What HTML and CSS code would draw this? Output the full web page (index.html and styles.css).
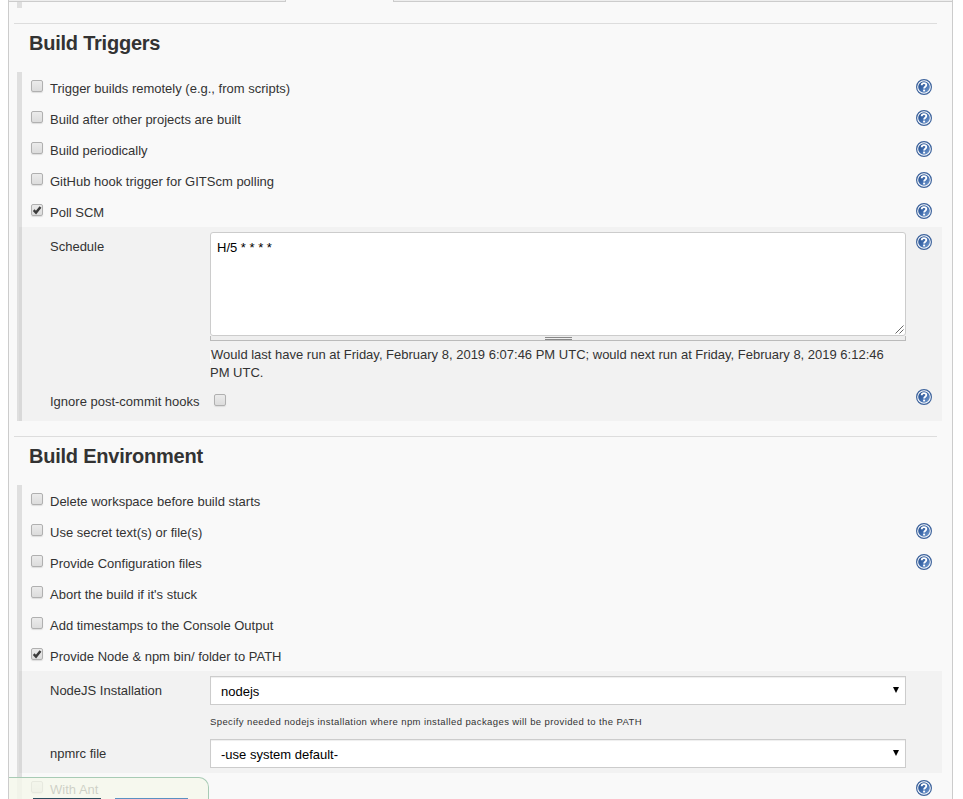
FILE: index.html
```html
<!DOCTYPE html>
<html lang="en">
<head>
<meta charset="utf-8">
<title>Project configuration</title>
<link rel="stylesheet" href="styles.css">
</head>
<body>
<svg class="defs" aria-hidden="true">
  <defs>
    <linearGradient id="blue" x1="0" y1="0" x2="1" y2="1"><stop offset="0" stop-color="#234b87"/><stop offset=".5" stop-color="#3f6cae"/><stop offset="1" stop-color="#7ba0d0"/></linearGradient>
    <symbol id="help" viewBox="0 0 16 16">
      <circle cx="8" cy="8" r="7.4" fill="#fff" stroke="#3d639c" stroke-width="1.2"/>
      <circle cx="8" cy="8" r="5.8" fill="url(#blue)"/>
      <path d="M5.7 6.2C5.7 3.4 10.3 3.4 10.3 6.1C10.3 7.7 8.2 7.7 8.1 9.5" fill="none" stroke="#fff" stroke-width="1.9"/>
      <path d="M7.1 10.6h2v1.8h-2z" fill="#fff"/>
    </symbol>
    <symbol id="tick" viewBox="0 0 12 12"><path d="M2.7 6.1L5 8.6L9.5 3" fill="none" stroke="#3b3b3b" stroke-width="2.4"/></symbol>
  </defs>
</svg>
<main class="panel">
  <div class="tabs"><i class="tab-left"></i><i class="tab-right"></i></div>
  <div class="previous"></div>
  <section class="section triggers">
    <h2>Build Triggers</h2>
    <div class="group">
      <div class="row"><i class="box"></i><span class="label">Trigger builds remotely (e.g., from scripts)</span><svg class="help"><use href="#help"/></svg></div>
      <div class="row"><i class="box"></i><span class="label">Build after other projects are built</span><svg class="help"><use href="#help"/></svg></div>
      <div class="row"><i class="box"></i><span class="label">Build periodically</span><svg class="help"><use href="#help"/></svg></div>
      <div class="row"><i class="box"></i><span class="label">GitHub hook trigger for GITScm polling</span><svg class="help"><use href="#help"/></svg></div>
      <div class="row"><i class="box"><svg><use href="#tick"/></svg></i><span class="label">Poll SCM</span><svg class="help"><use href="#help"/></svg></div>
      <div class="nested schedule">
        <div class="field">
          <span class="name">Schedule</span>
          <div class="control">
            <div class="textarea"><span>H/5 * * * *</span><svg class="grip" viewBox="0 0 9 9"><path d="M.5 8.5l8-8M4.5 8.5l4-4" fill="none" stroke="#666"/></svg></div>
            <div class="handle"><i></i></div>
            <p class="preview"><i></i>Would last have run at Friday, February 8, 2019 6:07:46 PM UTC; would next run at Friday, February 8, 2019 6:12:46<br>PM UTC.</p>
          </div>
          <svg class="help"><use href="#help"/></svg>
        </div>
        <div class="field hooks">
          <span class="name">Ignore post-commit hooks</span>
          <div class="control"><i class="box"></i></div>
          <svg class="help"><use href="#help"/></svg>
        </div>
      </div>
    </div>
  </section>
  <section class="section">
    <h2>Build Environment</h2>
    <div class="group">
      <div class="row"><i class="box"></i><span class="label">Delete workspace before build starts</span></div>
      <div class="row"><i class="box"></i><span class="label">Use secret text(s) or file(s)</span><svg class="help"><use href="#help"/></svg></div>
      <div class="row"><i class="box"></i><span class="label">Provide Configuration files</span><svg class="help"><use href="#help"/></svg></div>
      <div class="row"><i class="box"></i><span class="label">Abort the build if it's stuck</span></div>
      <div class="row"><i class="box"></i><span class="label">Add timestamps to the Console Output</span></div>
      <div class="row"><i class="box"><svg><use href="#tick"/></svg></i><span class="label">Provide Node &amp; npm bin/ folder to PATH</span></div>
      <div class="nested node">
        <div class="field">
          <span class="name">NodeJS Installation</span>
          <div class="control">
            <div class="select"><span>nodejs</span><i></i></div>
            <p class="hint">Specify needed nodejs installation where npm installed packages will be provided to the PATH</p>
          </div>
        </div>
        <div class="field">
          <span class="name">npmrc file</span>
          <div class="control"><div class="select"><span>-use system default-</span><i></i></div></div>
        </div>
      </div>
      <div class="row"><i class="box"></i><span class="label">With Ant</span><svg class="help"><use href="#help"/></svg></div>
    </div>
  </section>
  <div class="savebar"><i class="save"></i><i class="apply"></i></div>
</main>
</body>
</html>
```
FILE: styles.css
```css
* { box-sizing: border-box; }
body {
  margin: 0;
  height: 799px;
  overflow: hidden;
  background: #fff;
  color: #333;
  font: 13px/18px "Liberation Sans", Arial, sans-serif;
}
.defs { position: absolute; width: 0; height: 0; }
svg { display: block; }
.panel {
  position: relative;
  width: 945px;
  height: 799px;
  margin-left: 8px;
  overflow: hidden;
  border: solid #ccc;
  border-width: 0 1px;
  background: #f9f9f9;
}
.tabs { display: flex; justify-content: space-between; height: 2px; }
.tabs i { background: #eee; border-bottom: 1px solid #ccc; }
.tab-left { width: 277px; border-right: 1px solid #ccc; }
.tab-right { width: 559px; border-left: 1px solid #ccc; }
.previous { width: 5px; height: 6px; margin: 0 0 15px 8px; background: #dfdfdf; }
.section { margin: 0 15px 0 5px; border-top: 1px solid #ddd; }
h2 {
  margin: 7px 0 16px 15px;
  font-size: 20px;
  line-height: 25px;
  font-weight: bold;
  letter-spacing: -.23px;
}
.group {
  margin: 0 -5px 15px 3px;
  border-left: 5px solid #dfdfdf;
}
.row {
  display: grid;
  grid-template-columns: 19px 1fr 16px;
  height: 31px;
  padding: 8px 10px 0 9px;
}
.label { white-space: nowrap; }
.row .help { margin-top: -1px; }
.help { width: 16px; height: 16px; }
.box {
  display: block;
  width: 12px;
  height: 12px;
  border: 1px solid #b0b0b0;
  border-radius: 2px;
  background: linear-gradient(#ebebeb, #dcdcdc);
  box-shadow: 0 1px 1px #ddd;
}
.box svg { width: 12px; height: 12px; margin: -1px; }
.nested {
  margin-left: -3px;
  padding: 5px 10px 0 0;
  border-left: 3px solid #d9d9d9;
  background: #f2f2f2;
}
.schedule { height: 194px; }
.node { height: 102px; }
.field {
  display: grid;
  grid-template-columns: 160px 696px 16px;
  padding-left: 28px;
}
.field .help { margin: 2px 0 0 10px; }
.name { padding-top: 6px; white-space: nowrap; }
.textarea {
  display: flex;
  justify-content: space-between;
  height: 104px;
  padding: 6px 0 0 6px;
  border: 1px solid #ccc;
  border-radius: 3px;
  background: #fff;
  color: #000;
}
.grip { align-self: flex-end; width: 9px; height: 9px; margin: 0 1px 1px 0; }
.handle {
  display: flex;
  justify-content: center;
  height: 5px;
  border: solid #bbb;
  border-width: 0 1px 1px;
  background: #eee;
}
.handle i { width: 27px; height: 3px; margin-top: 1px; border: solid #888; border-width: 1px 0; }
p { margin: 0; white-space: nowrap; }
.preview { padding-top: 5px; }
.preview i { display: inline-block; width: 1px; height: 12px; background: #fff; vertical-align: -4px; }
.hooks { padding-top: 5px; }
.hooks .name { padding-top: 7px; margin-top: -1px; }
.hooks .box { margin: 7px 0 0 4px; }
.select {
  display: flex;
  justify-content: space-between;
  height: 29px;
  padding: 6px 6px 0 10px;
  border: 1px solid #ccc;
  background: #fff;
  box-shadow: inset 0 1px 1px #eee;
  color: #000;
}
.select i { height: 0; margin-top: 4px; border: solid transparent; border-width: 6px 3px 0; border-top-color: #000; }
.hint { height: 34px; padding-top: 8px; font-size: 9.5px; letter-spacing: .4px; }
.savebar {
  position: absolute;
  left: 0;
  bottom: 0;
  display: flex;
  align-items: flex-end;
  gap: 14px;
  width: 200px;
  height: 22px;
  padding-left: 24px;
  border: solid #a8cbb5;
  border-width: 1px 1px 0 0;
  border-radius: 0 10px 0 0;
  background: rgba(245, 247, 235, .8);
}
.savebar i { height: 1px; }
.save { width: 68px; background: #2b4c5e; }
.apply { width: 73px; background: #5b91c2; }
```
